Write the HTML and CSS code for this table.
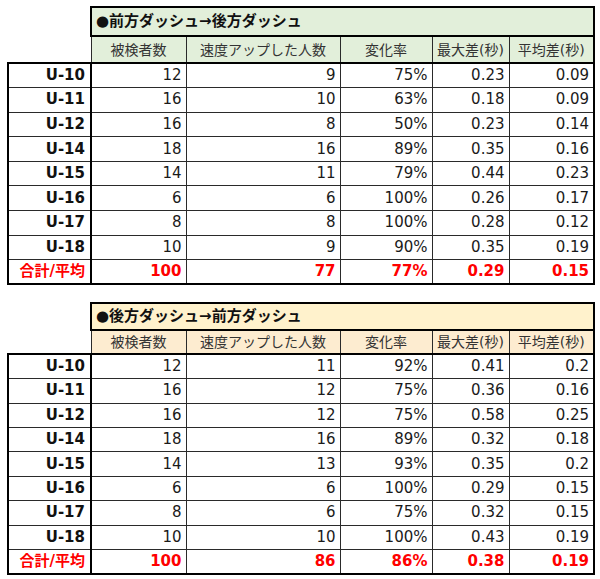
FILE: index.html
```html
<!DOCTYPE html>
<html lang="ja">
<head>
<meta charset="utf-8">
<link rel="stylesheet" href="styles.css">
</head>
<body>
<div class="page">
<table class="t t1">
<colgroup><col class="c1"><col class="c2"><col class="c3"><col class="c4"><col class="c5"><col class="c6"></colgroup>
<tr class="trow"><td class="blank" rowspan="2"></td><th class="title" colspan="5">●前方ダッシュ→後方ダッシュ</th></tr>
<tr class="hrow"><th>被検者数</th><th>速度アップした人数</th><th>変化率</th><th>最大差(秒)</th><th>平均差(秒)</th></tr>
<tr class="brow first"><th>U-10</th><td>12</td><td>9</td><td>75%</td><td>0.23</td><td>0.09</td></tr>
<tr class="brow"><th>U-11</th><td>16</td><td>10</td><td>63%</td><td>0.18</td><td>0.09</td></tr>
<tr class="brow"><th>U-12</th><td>16</td><td>8</td><td>50%</td><td>0.23</td><td>0.14</td></tr>
<tr class="brow"><th>U-14</th><td>18</td><td>16</td><td>89%</td><td>0.35</td><td>0.16</td></tr>
<tr class="brow"><th>U-15</th><td>14</td><td>11</td><td>79%</td><td>0.44</td><td>0.23</td></tr>
<tr class="brow"><th>U-16</th><td>6</td><td>6</td><td>100%</td><td>0.26</td><td>0.17</td></tr>
<tr class="brow"><th>U-17</th><td>8</td><td>8</td><td>100%</td><td>0.28</td><td>0.12</td></tr>
<tr class="brow"><th>U-18</th><td>10</td><td>9</td><td>90%</td><td>0.35</td><td>0.19</td></tr>
<tr class="brow total"><th>合計/平均</th><td>100</td><td>77</td><td>77%</td><td>0.29</td><td>0.15</td></tr>
</table>

<table class="t t2">
<colgroup><col class="c1"><col class="c2"><col class="c3"><col class="c4"><col class="c5"><col class="c6"></colgroup>
<tr class="trow"><td class="blank" rowspan="2"></td><th class="title" colspan="5">●後方ダッシュ→前方ダッシュ</th></tr>
<tr class="hrow"><th>被検者数</th><th>速度アップした人数</th><th>変化率</th><th>最大差(秒)</th><th>平均差(秒)</th></tr>
<tr class="brow first"><th>U-10</th><td>12</td><td>11</td><td>92%</td><td>0.41</td><td>0.2</td></tr>
<tr class="brow"><th>U-11</th><td>16</td><td>12</td><td>75%</td><td>0.36</td><td>0.16</td></tr>
<tr class="brow"><th>U-12</th><td>16</td><td>12</td><td>75%</td><td>0.58</td><td>0.25</td></tr>
<tr class="brow"><th>U-14</th><td>18</td><td>16</td><td>89%</td><td>0.32</td><td>0.18</td></tr>
<tr class="brow"><th>U-15</th><td>14</td><td>13</td><td>93%</td><td>0.35</td><td>0.2</td></tr>
<tr class="brow"><th>U-16</th><td>6</td><td>6</td><td>100%</td><td>0.29</td><td>0.15</td></tr>
<tr class="brow"><th>U-17</th><td>8</td><td>6</td><td>75%</td><td>0.32</td><td>0.15</td></tr>
<tr class="brow"><th>U-18</th><td>10</td><td>10</td><td>100%</td><td>0.43</td><td>0.19</td></tr>
<tr class="brow total"><th>合計/平均</th><td>100</td><td>86</td><td>86%</td><td>0.38</td><td>0.19</td></tr>
</table>
</div>
</body>
</html>
```

FILE: styles.css
```css
html, body {
  margin: 0;
  padding: 0;
  background: #ffffff;
}

.page {
  padding: 6px 0 0 7px;
  font-family: "DejaVu Sans", "Noto Sans CJK JP", sans-serif;
  color: #1e1e1e;
}

.t {
  border-collapse: collapse;
  table-layout: fixed;
  width: 586px;
}

.t2 {
  margin-top: 17px;
}

.c1 { width: 83px; }
.c2 { width: 95px; }
.c3 { width: 154px; }
.c4 { width: 92px; }
.c5 { width: 77px; }
.c6 { width: 85px; }

.t td, .t th {
  border: 1px solid #2a2a2a;
  padding: 0 4px 0 3px;
  white-space: nowrap;
  overflow: hidden;
  line-height: 1;
}

.t .blank {
  border: none;
  background: #fff;
}

.title {
  border: 2px solid #000 !important;
  text-align: left;
  font-size: 15px;
  font-weight: bold;
  color: #111;
  padding-left: 4px !important;
}

.t1 .title { background: #e2efda; }
.t2 .title { background: #fff2cc; }

.hrow th {
  font-weight: normal;
  font-size: 14px;
  text-align: center;
  color: #333;
  padding: 0 2px;
}

.t1 .hrow th { background: #e2efda; }
.t2 .hrow th { background: #fdecd0; }

.hrow th:last-child { border-right: 2px solid #000; }

.t1 .trow { height: 29px; }
.t1 .hrow { height: 27px; }
.t1 .brow { height: 24.6px; }

.t2 .trow { height: 27px; }
.t2 .hrow { height: 24px; }
.t2 .brow { height: 24.4px; }

.brow th {
  text-align: right;
  font-weight: bold;
  font-size: 15px;
  color: #111;
  border-left: 2px solid #000;
  border-right: 2px solid #000;
  padding-right: 5px;
}

.brow td {
  text-align: right;
  font-size: 15px;
  color: #1a1a1a;
  padding-right: 4px;
}

.brow td:last-child { border-right: 2px solid #000; }

.brow.first th, .brow.first td { border-top: 2px solid #000; }

.total th, .total td {
  border-bottom: 2px solid #000;
  color: #ff0000;
  font-weight: bold;
}
```
